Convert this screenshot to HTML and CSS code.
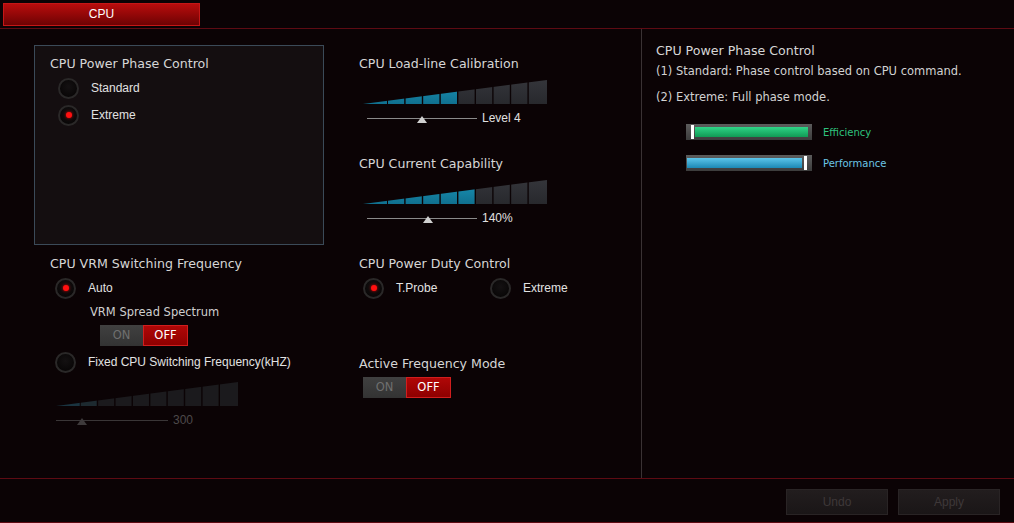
FILE: index.html
```html
<!DOCTYPE html>
<html lang="en">
<head>
  <meta charset="UTF-8" />
  <title>CPU Power</title>
  <link rel="stylesheet" href="styles.css">
</head>
<body>
  <header class="topbar">
    <div class="tab">CPU</div>
  </header>

  <main class="main">
    <section class="settings">
      <!-- left column -->
      <div class="col">
        <div class="group">
          <h2 class="title">CPU Power Phase Control</h2>
          <div class="options">
            <label class="radio"><span class="dot"></span>Standard</label>
            <label class="radio"><span class="dot on"></span>Extreme</label>
          </div>
        </div>

        <div class="vrm">
          <h2 class="title">CPU VRM Switching Frequency</h2>
          <label class="radio vrm-radio"><span class="dot on"></span>Auto</label>
          <p class="subtitle">VRM Spread Spectrum</p>
          <div class="toggle vrm-toggle"><span class="t-on">ON</span><span class="t-off">OFF</span></div>
          <label class="radio vrm-radio fixed"><span class="dot"></span>Fixed CPU Switching Frequency(kHZ)</label>

          <div class="dim">
            <svg class="stair stair-small" viewBox="0 0 184 24" preserveAspectRatio="none">
              <g clip-path="url(#wedge)">
                <rect x="0" y="0" width="24" height="24" fill="#1a3440" />
                <rect x="25" y="0" width="16.2" height="24" fill="#1d2a30" />
                <rect x="42.6" y="0" width="16.2" height="24" fill="#1b1a1d" />
                <rect x="60.2" y="0" width="16.2" height="24" fill="#1b1a1d" />
                <rect x="77.8" y="0" width="16.2" height="24" fill="#1b1a1d" />
                <rect x="95.4" y="0" width="16.2" height="24" fill="#1b1a1d" />
                <rect x="113" y="0" width="16.2" height="24" fill="#1b1a1d" />
                <rect x="130.6" y="0" width="16.2" height="24" fill="#1b1a1d" />
                <rect x="148.2" y="0" width="16.2" height="24" fill="#1b1a1d" />
                <rect x="165.8" y="0" width="18.2" height="24" fill="#1b1a1d" />
              </g>
            </svg>
            <div class="slider slider-small">
              <div class="track"><span class="thumb" style="left: 21px"></span></div>
              <span class="value">300</span>
            </div>
          </div>
        </div>
      </div>

      <!-- middle column -->
      <div class="col col-mid">
        <h2 class="title">CPU Load-line Calibration</h2>
        <svg class="stair" viewBox="0 0 184 24">
          <defs>
            <clipPath id="wedge"><polygon points="0,24 184,0 184,24" /></clipPath>
            <linearGradient id="blue" x1="0" y1="0" x2="0" y2="1">
              <stop offset="0" stop-color="#1a94b8" />
              <stop offset="1" stop-color="#10708f" />
            </linearGradient>
            <linearGradient id="gray" x1="0" y1="0" x2="0" y2="1">
              <stop offset="0" stop-color="#34353a" />
              <stop offset="1" stop-color="#28292d" />
            </linearGradient>
          </defs>
          <g clip-path="url(#wedge)">
            <rect x="0" y="0" width="24" height="24" fill="url(#blue)" />
            <rect x="25" y="0" width="16.2" height="24" fill="url(#blue)" />
            <rect x="42.6" y="0" width="16.2" height="24" fill="url(#blue)" />
            <rect x="60.2" y="0" width="16.2" height="24" fill="url(#blue)" />
            <rect x="77.8" y="0" width="16.2" height="24" fill="url(#blue)" />
            <rect x="95.4" y="0" width="16.2" height="24" fill="url(#gray)" />
            <rect x="113" y="0" width="16.2" height="24" fill="url(#gray)" />
            <rect x="130.6" y="0" width="16.2" height="24" fill="url(#gray)" />
            <rect x="148.2" y="0" width="16.2" height="24" fill="url(#gray)" />
            <rect x="165.8" y="0" width="18.2" height="24" fill="url(#gray)" />
          </g>
        </svg>
        <div class="slider">
          <div class="track"><span class="thumb" style="left: 50px"></span></div>
          <span class="value">Level 4</span>
        </div>

        <h2 class="title gap-title">CPU Current Capability</h2>
        <svg class="stair" viewBox="0 0 184 24">
          <g clip-path="url(#wedge)">
            <rect x="0" y="0" width="24" height="24" fill="url(#blue)" />
            <rect x="25" y="0" width="16.2" height="24" fill="url(#blue)" />
            <rect x="42.6" y="0" width="16.2" height="24" fill="url(#blue)" />
            <rect x="60.2" y="0" width="16.2" height="24" fill="url(#blue)" />
            <rect x="77.8" y="0" width="16.2" height="24" fill="url(#blue)" />
            <rect x="95.4" y="0" width="16.2" height="24" fill="url(#blue)" />
            <rect x="113" y="0" width="16.2" height="24" fill="url(#gray)" />
            <rect x="130.6" y="0" width="16.2" height="24" fill="url(#gray)" />
            <rect x="148.2" y="0" width="16.2" height="24" fill="url(#gray)" />
            <rect x="165.8" y="0" width="18.2" height="24" fill="url(#gray)" />
          </g>
        </svg>
        <div class="slider">
          <div class="track"><span class="thumb" style="left: 56px"></span></div>
          <span class="value">140%</span>
        </div>

        <h2 class="title gap-title">CPU Power Duty Control</h2>
        <div class="duty">
          <label class="radio duty-first"><span class="dot on"></span>T.Probe</label>
          <label class="radio"><span class="dot"></span>Extreme</label>
        </div>

        <h2 class="title afm-title">Active Frequency Mode</h2>
        <div class="toggle afm-toggle"><span class="t-on">ON</span><span class="t-off">OFF</span></div>
      </div>
    </section>

    <!-- help panel -->
    <aside class="info">
      <h2 class="title">CPU Power Phase Control</h2>
      <p class="desc">(1) Standard: Phase control based on CPU command.</p>
      <p class="desc desc-2">(2) Extreme: Full phase mode.</p>

      <div class="meter-row first-meter">
        <div class="meter eff"><span class="knob"></span><span class="fill"></span></div>
        <span class="meter-label eff-label">Efficiency</span>
      </div>
      <div class="meter-row">
        <div class="meter perf"><span class="fill"></span><span class="knob"></span></div>
        <span class="meter-label perf-label">Performance</span>
      </div>
    </aside>
  </main>

  <footer class="bottombar">
    <button type="button" class="btn">Undo</button>
    <button type="button" class="btn">Apply</button>
  </footer>
</body>
</html>
```

FILE: styles.css
```css
:root {
  --bg: #0b0305;
  --line-red: #5e0b13;
  --text: #dcdcdc;
  --title: #d6d6d6;
}

* {
  box-sizing: border-box;
  margin: 0;
  padding: 0;
}

body {
  width: 1014px;
  height: 523px;
  overflow: hidden;
  background-color: var(--bg);
  color: var(--text);
  font-family: "Liberation Sans", Arial, sans-serif;
  font-size: 12px;
}

/* header */
.topbar {
  height: 29px;
  padding: 3px 0 0 3px;
  border-bottom: 1px solid var(--line-red);
}

.tab {
  width: 197px;
  height: 23px;
  background: linear-gradient(#b80d0d, #6e0203);
  border: 1px solid #c41717;
  color: #fff;
  text-align: center;
  line-height: 21px;
  font-size: 12px;
}

/* main area */
.main {
  display: flex;
  height: 449px;
}

.settings {
  width: 641px;
  display: grid;
  grid-template-columns: 290px 190px;
  column-gap: 35px;
  align-content: start;
  padding: 16px 0 0 34px;
}

.col {
  display: flex;
  flex-direction: column;
  align-items: flex-start;
}

.title {
  font-family: "DejaVu Sans", Verdana, sans-serif;
  font-size: 12.6px;
  font-weight: normal;
  line-height: 16px;
  color: var(--title);
  white-space: nowrap;
}

.group {
  width: 290px;
  height: 200px;
  border: 1px solid #3b4a58;
  background-color: #140e10;
  padding: 10px 0 0 15px;
}

.options {
  display: flex;
  flex-direction: column;
  gap: 5px;
  margin: 5px 0 0 8px;
}

.radio {
  display: flex;
  align-items: center;
  gap: 12px;
  height: 22px;
  color: #e2e2e2;
  font-size: 12px;
  white-space: nowrap;
}

.dot {
  width: 21px;
  height: 21px;
  border-radius: 50%;
  border: 2px solid #2a2828;
  background: radial-gradient(circle at 50% 40%, #141112, #050303);
  display: flex;
  align-items: center;
  justify-content: center;
}

.dot.on::after {
  content: "";
  width: 6px;
  height: 6px;
  border-radius: 50%;
  background-color: #ff1010;
  box-shadow: 0 0 3px #e00000;
}

/* VRM block */
.vrm {
  display: flex;
  flex-direction: column;
  align-items: flex-start;
  padding-left: 16px;
  margin-top: 11px;
}

.vrm-radio {
  margin: 5px 0 0 5px;
}

.vrm-radio.fixed {
  margin-top: 5px;
}

.subtitle {
  font-family: "DejaVu Sans", Verdana, sans-serif;
  font-size: 11.5px;
  line-height: 16px;
  color: #cfcfcf;
  margin: 5px 0 0 40px;
}

.toggle {
  display: flex;
  width: 88px;
  height: 21px;
  font-family: "DejaVu Sans", Verdana, sans-serif;
  font-size: 11.5px;
  line-height: 21px;
  text-align: center;
}

.t-on {
  flex: 1;
  background: linear-gradient(#404040, #333);
  color: #6f6f6f;
}

.t-off {
  flex: 1;
  background: linear-gradient(#b00707, #8e0000);
  border: 1px solid #d01e1e;
  line-height: 19px;
  color: #fff;
}

.vrm-toggle {
  margin: 5px 0 0 50px;
}

.dim {
  margin: 9px 0 0 6px;
}

/* stair bars + slider */
.stair {
  display: block;
  width: 184px;
  height: 24px;
  margin: 8px 0 0 4px;
}

.stair-small {
  width: 182px;
  margin: 0;
}

.slider {
  display: flex;
  align-items: center;
  height: 14px;
  margin: 7px 0 0 8px;
}

.track {
  position: relative;
  width: 110px;
  height: 1px;
  background-color: #8a8a8a;
}

.thumb {
  position: absolute;
  top: -2px;
  width: 0;
  height: 0;
  border-left: 5px solid transparent;
  border-right: 5px solid transparent;
  border-bottom: 7px solid #d0d0d0;
}

.value {
  margin-left: 5px;
  color: #e0e0e0;
  font-size: 12px;
}

.slider-small {
  margin: 7px 0 0 0;
}

.slider-small .track {
  width: 112px;
  background-color: #3a3637;
}

.slider-small .thumb {
  border-bottom-color: #3e3a3b;
}

.slider-small .value {
  color: #4d494a;
}

/* middle column */
.col-mid {
  padding-top: 11px;
}

.gap-title {
  margin-top: 31px;
}

.duty {
  display: flex;
  margin: 5px 0 0 4px;
}

.duty-first {
  width: 127px;
}

.afm-title {
  margin-top: 57px;
}

.afm-toggle {
  margin: 5px 0 0 4px;
}

/* help panel */
.info {
  flex: 1;
  border-left: 1px solid #3a3234;
  padding: 14px 0 0 14px;
}

.desc {
  font-family: "DejaVu Sans", Verdana, sans-serif;
  font-size: 11.5px;
  line-height: 14px;
  color: #d2d2d2;
  margin-top: 5px;
}

.desc-2 {
  margin-top: 12px;
}

.meter-row {
  display: flex;
  align-items: center;
  gap: 11px;
  margin: 15px 0 0 30px;
}

.first-meter {
  margin-top: 20px;
}

.meter {
  display: flex;
  align-items: center;
  width: 126px;
  height: 16px;
  background: linear-gradient(#5c5c5c, #3c3c3c);
}

.meter .knob {
  width: 3px;
  height: 14px;
  background-color: #fff;
}

.meter .fill {
  flex: 1;
  height: 10px;
}

.eff {
  padding: 0 4px 0 5px;
  gap: 1px;
}

.eff .fill {
  background: linear-gradient(#2fd487, #119a55);
}

.perf {
  padding: 0 5px 0 1px;
  gap: 2px;
}

.perf .fill {
  background: linear-gradient(#5cc5ea, #1c88b4);
}

.meter-label {
  font-family: "DejaVu Sans", Verdana, sans-serif;
  font-size: 10px;
}

.eff-label {
  color: #2ec27d;
}

.perf-label {
  color: #6cc6e6;
}

/* footer */
.bottombar {
  display: flex;
  justify-content: flex-end;
  gap: 10px;
  height: 45px;
  padding: 10px 14px 0 0;
  border-top: 1px solid var(--line-red);
  border-bottom: 1px solid var(--line-red);
}

.btn {
  width: 102px;
  height: 26px;
  background: linear-gradient(#221d1e, #1a1617);
  border: 1px solid #292425;
  color: #3e3839;
  font-family: "Liberation Sans", Arial, sans-serif;
  font-size: 12px;
}
```
